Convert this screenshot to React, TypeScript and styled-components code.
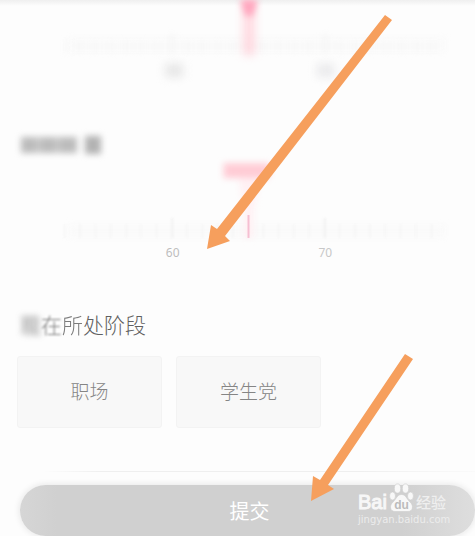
import React from "react";
import styled, { createGlobalStyle } from "styled-components";

const GlobalStyle = createGlobalStyle`
  * { box-sizing: border-box; }
  body {
    margin: 0;
    background: #fdfdfd;
    font-family: "Noto Sans CJK SC", "Noto Sans", sans-serif;
  }
`;

const Page = styled.main`
  position: relative;
  display: flex;
  flex-direction: column;
  overflow: hidden;
  background: linear-gradient(#efefef, #fdfdfd 6px);
`;

const Content = styled.div`
  display: flex;
  flex-direction: column;
  padding-left: 20px;
`;

const Scale = styled.svg<{ $height: number }>`
  display: block;
  width: 100%;
  height: ${(p) => p.$height}px;
  overflow: visible;
`;

const HiddenTitle = styled.svg`
  display: block;
  width: 84px;
  height: 20px;
  margin-top: 35px;
  overflow: visible;
`;

const StageTitle = styled.h2`
  margin: 43px 0 16px;
  color: #606060;
  font-size: 21px;
  font-weight: 300;
  line-height: 32px;
`;

const Soft = styled.span<{ $blur: number; $tone: string }>`
  display: inline-block;
  color: ${(p) => p.$tone};
  filter: blur(${(p) => p.$blur}px);
`;

const Options = styled.div`
  display: flex;
  gap: 14px;
  margin-left: -3px;
`;

const Option = styled.button`
  width: 145px;
  height: 72px;
  padding: 0 0 4px;
  border: 1px solid #f3f3f3;
  border-radius: 3px;
  background: #f8f8f8;
  color: #858585;
  font-family: inherit;
  font-size: 19px;
  font-weight: 300;
`;

const Footer = styled.footer`
  display: flex;
  flex-direction: column;
  gap: 13px;
  margin-top: 43px;
`;

const Divider = styled.div`
  height: 1px;
  background: linear-gradient(90deg, #fdfdfd 5%, #efefef 18%, #efefef 75%, #fafafa);
`;

const Submit = styled.button`
  width: 100%;
  height: 51px;
  padding: 0 0 0 4px;
  border: 0;
  border-radius: 26px;
  background: linear-gradient(90deg, #d6d6d6, #d0d0d0 8%, #d0d0d0 84%, #dedede);
  box-shadow: 0 0 7px #e2e2e2;
  color: #fff;
  font-family: inherit;
  font-size: 20px;
  font-weight: 400;
`;

const Arrows = styled.svg`
  position: absolute;
  top: 0;
  left: 0;
  width: 475px;
  height: 536px;
  pointer-events: none;
`;

const Watermark = styled.div`
  position: absolute;
  right: 26px;
  bottom: 9px;
  width: 91px;
  color: #f7f7f7;
  pointer-events: none;
`;

const Brand = styled.div`
  display: flex;
  align-items: flex-end;
  height: 30px;
`;

const BrandLatin = styled.span`
  width: 31px;
  font: 400 20px/22px "Liberation Sans", sans-serif;
  -webkit-text-stroke: 1px #f7f7f7;
`;

const BrandHan = styled.span`
  padding-left: 2px;
  color: #efefef;
  font-size: 15px;
  font-weight: 500;
  line-height: 22px;
`;

const Paw = styled.svg`
  flex: none;
  width: 25px;
  height: 30px;
`;

const Site = styled.div`
  color: #ececec;
  font: 400 10px/14px "DejaVu Sans", sans-serif;
  white-space: nowrap;
`;

const ticks = Array.from({ length: 25 }, (_, i) => i - 12);

function Ticks({ top, blur }: { top: number; blur: string }) {
  return (
    <g filter={`url(#${blur})`}>
      {ticks.map((n) => {
        const long = Math.abs(n) % 10 === 5;
        return (
          <rect
            key={n}
            x={n * 15.3}
            y={long ? top - 6 : top}
            width={long ? 2 : 1}
            height={long ? 20 : 14}
            fill={long ? "#f1f1f1" : "#f3f3f3"}
          />
        );
      })}
    </g>
  );
}

function HeightScale() {
  return (
    <Scale $height={100} viewBox="-228 0 456 100">
      <defs>
        <filter id="light" x="-20%" y="-50%" width="140%" height="200%" colorInterpolationFilters="sRGB">
          <feGaussianBlur stdDeviation="1" />
        </filter>
        <filter id="soft" x="-30%" y="-60%" width="160%" height="220%" colorInterpolationFilters="sRGB">
          <feGaussianBlur stdDeviation="3" />
        </filter>
        <filter id="haze" x="-200%" y="-100%" width="500%" height="300%" colorInterpolationFilters="sRGB">
          <feGaussianBlur stdDeviation="5" />
        </filter>
      </defs>
      <rect x="-180" y="38" width="378" height="14" fill="#fafafa" filter="url(#soft)" />
      <Ticks top={40} blur="soft" />
      <g filter="url(#haze)">
        <rect x="-82" y="64" width="17" height="13" fill="#e5e5e5" />
        <rect x="70" y="64" width="17" height="13" fill="#e9e9eb" />
        <rect x="-4" y="0" width="11" height="55" fill="#ffd6de" />
      </g>
      <path d="M-7 0h17L5 16h-7z" fill="#ffa6be" filter="url(#soft)" />
    </Scale>
  );
}

function WeightScale() {
  return (
    <Scale $height={110} viewBox="-228 0 456 110">
      <rect x="-180" y="70" width="378" height="12" fill="#fafafa" filter="url(#soft)" />
      <Ticks top={69} blur="light" />
      <g filter="url(#soft)">
        <rect x="-24" y="8" width="46" height="15" fill="#ffccd5" />
        <path d="M-9 24H13L6 55V83H-3V55z" fill="#fff0f3" />
      </g>
      <rect x="0" y="60" width="2" height="23" fill="#f6bfd2" />
      <g fill="#bdbdbd" fontFamily="Noto Sans, sans-serif" fontSize="12" textAnchor="middle">
        <text x="-75" y="102">60</text>
        <text x="78" y="102" fill="#c8c8c8">70</text>
      </g>
    </Scale>
  );
}

export default function App() {
  return (
    <>
      <GlobalStyle />
      <Page>
        <Content>
          <HeightScale />
          <HiddenTitle viewBox="0 0 84 20" aria-hidden="true">
            <g filter="url(#soft)" fill="#bcbcbc">
              <rect x="1" y="2" width="17" height="16" />
              <rect x="19" y="2" width="18" height="16" />
              <rect x="38" y="2" width="19" height="16" />
              <rect x="65" y="1" width="16" height="18" fill="#b3b3b3" />
            </g>
          </HiddenTitle>
          <WeightScale />
          <StageTitle>
            <Soft $blur={3} $tone="#444">现</Soft>
            <Soft $blur={1} $tone="#7c7c7c">在</Soft>
            <Soft $blur={0} $tone="#7c7c7c">所</Soft>
            处阶段
          </StageTitle>
          <Options>
            <Option type="button">职场</Option>
            <Option type="button">学生党</Option>
          </Options>
          <Footer>
            <Divider />
            <Submit type="submit">提交</Submit>
          </Footer>
        </Content>
        <Arrows viewBox="0 0 475 536" aria-hidden="true">
          <g fill="#f69f5d">
            <path d="M385 15L392 20L225 236L230 241L207 249L211 225L217 229Z" />
            <path d="M405 354L413 359L328 485L334 489L311 501L313 476L320 480Z" />
          </g>
        </Arrows>
        <Watermark>
          <Brand>
            <BrandLatin>Bai</BrandLatin>
            <Paw viewBox="0 0 25 30">
              <g fill="#f8f8f8" stroke="#cdcdcd" strokeWidth="0.6">
                <ellipse cx="3.500" cy="13" rx="3" ry="4" />
                <ellipse cx="8.500" cy="5.500" rx="3.200" ry="4.600" />
                <ellipse cx="16.500" cy="5.500" rx="3.200" ry="4.600" />
                <ellipse cx="21.500" cy="13" rx="3" ry="4" />
                <path d="M12.500 11.500C8 11.500 7.500 16 4 19C0 22.500 1 28.500 6 28.500H19C24 28.500 25 22.500 21 19C17.500 16 17 11.500 12.500 11.500Z" />
              </g>
              <text x="12.500" y="26" textAnchor="middle" fill="#bcbcbc" fontFamily="Liberation Sans, sans-serif" fontSize="12" fontWeight="700">
                du
              </text>
            </Paw>
            <BrandHan>经验</BrandHan>
          </Brand>
          <Site>jingyan.baidu.com</Site>
        </Watermark>
      </Page>
    </>
  );
}
